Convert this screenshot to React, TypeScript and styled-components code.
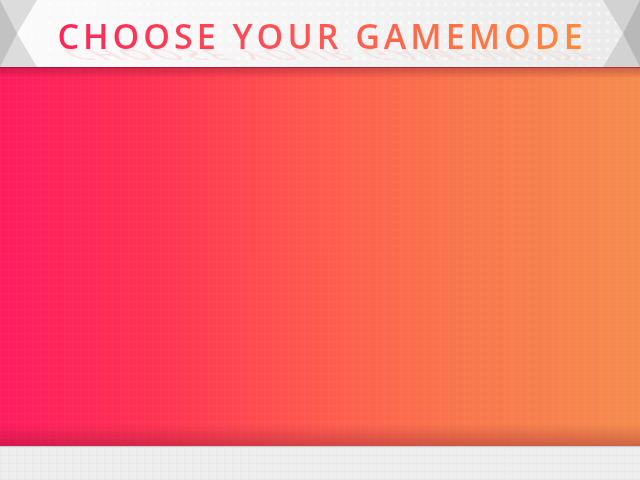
import React from "react";
import styled, { createGlobalStyle } from "styled-components";

const GlobalStyle = createGlobalStyle`
  html, body {
    margin: 0;
    padding: 0;
    width: 640px;
    height: 480px;
    overflow: hidden;
    background: #eeeeee;
    font-family: "Open Sans", "Liberation Sans", sans-serif;
  }
`;

const App: React.FC = () => {
  return (
    <>
      <GlobalStyle />
      <Screen>
        <Header>
          <Corner side="left">
            <svg width="40" height="67" viewBox="0 0 40 67">
              <polygon points="0,0 37,0 17,33.5 37,67 0,67" fill="#dcdcdc" />
              <polygon points="0,0 17,33.5 0,67" fill="#c2c2c2" />
            </svg>
          </Corner>
          <TitleWrap>
            <Title>CHOOSE YOUR GAMEMODE</Title>
            <Reflection aria-hidden>CHOOSE YOUR GAMEMODE</Reflection>
          </TitleWrap>
          <Corner side="right">
            <svg width="40" height="67" viewBox="0 0 40 67">
              <polygon points="40,0 3,0 23,33.5 3,67 40,67" fill="#d2d2d2" />
              <polygon points="40,0 23,33.5 40,67" fill="#b8b8b8" />
            </svg>
          </Corner>
        </Header>
        <Band />
        <Footer />
      </Screen>
    </>
  );
};

export default App;

const Screen = styled.div`
  display: flex;
  flex-direction: column;
  width: 640px;
  height: 480px;
`;

const Header = styled.header`
  position: relative;
  height: 67px;
  display: flex;
  align-items: flex-start;
  justify-content: center;
  overflow: hidden;
  background:
    radial-gradient(circle, rgba(255, 255, 255, 0.55) 1px, transparent 2.5px) 0 0 / 9px 9px,
    linear-gradient(90deg, #fbfbfb 0%, #f4f4f4 50%, #eaeaea 100%);
`;

const Corner = styled.div<{ side: "left" | "right" }>`
  position: absolute;
  top: 0;
  ${(p) => (p.side === "left" ? "left: 0;" : "right: 0;")}
  height: 67px;
  svg {
    display: block;
  }
`;

const TitleWrap = styled.div`
  position: relative;
  margin-top: 16px;
  margin-left: 4px;
`;

const textGradient = `
  background: linear-gradient(90deg, #ff2457 0%, #ff4d55 40%, #ff8a3c 100%);
  -webkit-background-clip: text;
  background-clip: text;
  color: transparent;
`;

const Title = styled.h1`
  margin: 0;
  font-family: "Open Sans", "Liberation Sans", sans-serif;
  font-weight: 600;
  font-size: 34px;
  line-height: 40px;
  letter-spacing: 4px;
  white-space: nowrap;
  ${textGradient}
`;

const Reflection = styled.div`
  position: absolute;
  left: 0;
  top: 0;
  font-family: "Open Sans", "Liberation Sans", sans-serif;
  font-weight: 600;
  font-size: 34px;
  line-height: 40px;
  letter-spacing: 4px;
  white-space: nowrap;
  transform-origin: 0 33px;
  transform: scaleY(-0.45) skewX(-40deg);
  opacity: 0.1;
  ${textGradient}
`;

const Band = styled.main`
  height: 379px;
  background:
    linear-gradient(180deg, rgba(120, 10, 40, 0.35) 0px, rgba(120, 10, 40, 0) 12px, rgba(120, 10, 40, 0) calc(100% - 22px), rgba(110, 10, 40, 0.3) 100%),
    repeating-linear-gradient(90deg, rgba(255, 255, 255, 0.035) 0 1px, transparent 1px 8px),
    repeating-linear-gradient(0deg, rgba(255, 255, 255, 0.035) 0 1px, transparent 1px 8px),
    linear-gradient(90deg, #ff1c5f 0%, #ff3452 25%, #ff5a4e 50%, #f9744c 70%, #f68c4e 100%);
  box-shadow: inset 0 1px 0 rgba(120, 20, 50, 0.5);
`;

const Footer = styled.footer`
  flex: 1;
  border-top: 1px solid #c9c9c9;
  background:
    repeating-linear-gradient(90deg, rgba(0, 0, 0, 0.02) 0 1px, transparent 1px 8px),
    repeating-linear-gradient(0deg, rgba(0, 0, 0, 0.02) 0 1px, transparent 1px 8px),
    #eeeeee;
`;
